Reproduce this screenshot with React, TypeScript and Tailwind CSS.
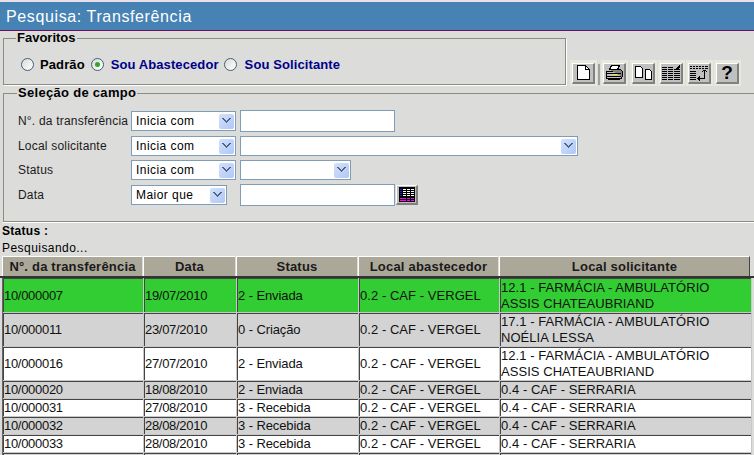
const rows = [
  { id: "10/000007", date: "19/07/2010", status: "2 - Enviada", from: "0.2 - CAF - VERGEL", to: ["12.1 - FARMÁCIA - AMBULATÓRIO", "ASSIS CHATEAUBRIAND"], bg: "bg-[#32cd32]", h: "h-[34px]" },
  { id: "10/000011", date: "23/07/2010", status: "0 - Criação", from: "0.2 - CAF - VERGEL", to: ["17.1 - FARMÁCIA - AMBULATÓRIO", "NOÉLIA LESSA"], bg: "bg-[#d3d3d3]", h: "h-[33px]" },
  { id: "10/000016", date: "27/07/2010", status: "2 - Enviada", from: "0.2 - CAF - VERGEL", to: ["12.1 - FARMÁCIA - AMBULATÓRIO", "ASSIS CHATEAUBRIAND"], bg: "bg-white", h: "h-[33px]" },
  { id: "10/000020", date: "18/08/2010", status: "2 - Enviada", from: "0.2 - CAF - VERGEL", to: ["0.4 - CAF - SERRARIA"], bg: "bg-[#d3d3d3]", h: "h-[17px]" },
  { id: "10/000031", date: "27/08/2010", status: "3 - Recebida", from: "0.2 - CAF - VERGEL", to: ["0.4 - CAF - SERRARIA"], bg: "bg-white", h: "h-[17px]" },
  { id: "10/000032", date: "28/08/2010", status: "3 - Recebida", from: "0.2 - CAF - VERGEL", to: ["0.4 - CAF - SERRARIA"], bg: "bg-[#d3d3d3]", h: "h-[17px]" },
  { id: "10/000033", date: "28/08/2010", status: "3 - Recebida", from: "0.2 - CAF - VERGEL", to: ["0.4 - CAF - SERRARIA"], bg: "bg-white", h: "h-[17px]" },
  { id: "", date: "", status: "", from: "", to: [""], bg: "bg-[#d3d3d3]", h: "h-[17px]" },
];

const headers = [
  { label: "N°. da transferência", w: "w-[140px]" },
  { label: "Data", w: "w-[92px]" },
  { label: "Status", w: "w-[121px]" },
  { label: "Local abastecedor", w: "w-[140px]" },
  { label: "Local solicitante", w: "w-[251px] border-r border-r-[#444]" },
];

const cellStyles = [
  "w-[140px] tracking-[-0.3px]",
  "w-[92px] tracking-[-0.3px]",
  "w-[121px] tracking-[-0.1px]",
  "w-[140px] tracking-[0.05px]",
];

function Chevron() {
  return (
    <span className="flex h-[15px] w-[15px] items-center justify-center rounded-[2px] bg-gradient-to-br from-[#d3e0fb] to-[#b0c8f5]">
      <svg width="9" height="6" viewBox="0 0 9 6" shapeRendering="crispEdges">
        <path d="M0 0h2v1h1v1h1v1h1V2h1V1h1V0h2v1H8v1H7v1H6v1H5v1H4V4H3V3H2V2H1V1H0z" fill="#4d6185" />
      </svg>
    </span>
  );
}

function Combo({ value, width }: { value?: string; width: string }) {
  return (
    <div className={`flex h-5 shrink-0 items-center justify-between border border-[#7f9db9] bg-white pl-1 pr-px ${width}`}>
      <span className="tracking-[0.45px]">{value}</span>
      <Chevron />
    </div>
  );
}

function TextBox({ className }: { className: string }) {
  return <input type="text" className={`shrink-0 border border-[#7f9db9] bg-white ${className}`} />;
}

function Radio({ checked }: { checked?: boolean }) {
  return (
    <span className="flex h-[13px] w-[13px] shrink-0 items-center justify-center rounded-full border border-[#3f5f80] bg-gradient-to-br from-[#dcdcd4] to-white">
      {checked && <span className="h-[5px] w-[5px] rounded-full bg-[#31a52f]" />}
    </span>
  );
}

function ToolButton({ children }: { children: React.ReactNode }) {
  return (
    <div className="flex h-[26px] w-[27px] items-center justify-center bg-[#e8e8dc]">
      <div className="flex h-[21px] w-[23px] items-center justify-center border-t border-l border-white border-r-2 border-b-2 border-r-[#808080] border-b-[#808080] bg-[#c0c0c0]">
        {children}
      </div>
    </div>
  );
}

function NewIcon() {
  return (
    <svg width="13" height="15" viewBox="0 0 13 15" shapeRendering="crispEdges">
      <path d="M.5.5h8l4 4v10H.5z" fill="#fff" stroke="#000" />
      <path d="M8.5.5v4h4" fill="none" stroke="#000" />
    </svg>
  );
}

function PrintIcon() {
  return (
    <svg width="17" height="15" viewBox="0 0 17 15" shapeRendering="crispEdges">
      <path d="M5.5.5h8l-2 4h-8z" fill="#fff" stroke="#000" />
      <path d="M.5 6.5h15v7H.5z" fill="#c0c0c0" stroke="#000" />
      <path d="M3.5 4.5h11l2 2v5h-1" fill="#808080" stroke="#000" />
      <path d="M1 8h14M1 11h14" stroke="#000" />
      <path d="M6 9h5v1H6z" fill="#ffea00" />
      <path d="M2 14h12v1H2z" fill="#000" />
    </svg>
  );
}

function CopyIcon() {
  return (
    <svg width="17" height="14" viewBox="0 0 17 14" shapeRendering="crispEdges">
      <path d="M.5.5h5l2 2v9H.5z" fill="#fff" stroke="#000" />
      <path d="M10.5 3.5h4l2 2v8h-6z" fill="#fff" stroke="#000" />
    </svg>
  );
}

function ColumnsIcon() {
  const lines = [4, 6, 8, 10, 12, 14];
  return (
    <svg width="18" height="16" viewBox="0 0 18 16" shapeRendering="crispEdges">
      {lines.map((y) => (
        <path key={y} d={`M0 ${y}h5M6 ${y}h5M12 ${y}h6`} stroke="#000" fill="none" />
      ))}
      <path d="M0 2h5M6 2h5" stroke="#000" fill="none" />
      <path d="M13 5h3v-1h-2v-1h1V2h1V1h1V0h1v3h-1v2z" fill="#000" />
    </svg>
  );
}

function SortIcon() {
  return (
    <svg width="18" height="16" viewBox="0 0 18 16" shapeRendering="crispEdges">
      <path d="M0 1h2M3 1h2M6 1h2M9 1h2M12 1h2M15 1h3M0 3h2M3 3h2M6 3h2M9 3h2M12 3h2M15 3h3" stroke="#000" fill="none" />
      <path d="M0 6h6M0 8h6M0 10h6M0 12h6M0 14h6" stroke="#000" fill="none" />
      <path d="M14 6h1v8H9v-1h5zM12 6h5v1h-1v-1h-3v1h-1zM13 5h3v1h-3zM9 11h1v5H9zM8 12h1v3H8zM7 13h1v1H7z" fill="#000" />
    </svg>
  );
}

function HelpIcon() {
  return <span className="text-[19px] leading-none font-bold text-black">?</span>;
}

function CalendarIcon() {
  const cells = [];
  for (const y of [2, 4, 6, 8]) {
    cells.push(<rect key={`b${y}`} x="1" y={y} width="2" height="1" fill="#2020c0" />);
    for (const x of [4, 8, 12]) {
      cells.push(<rect key={`${x}-${y}`} x={x} y={y} width="3" height="1" fill="#fff" />);
    }
  }
  for (const y of [11, 13]) {
    for (const x of [1, 4, 8, 12]) {
      cells.push(<rect key={`${x}-${y}`} x={x} y={y} width="3" height="1" fill="#f0f" />);
    }
  }
  return (
    <span className="flex h-5 w-[22px] items-center justify-center border-t border-l border-white border-r-2 border-b-2 border-r-[#808080] border-b-[#808080] bg-[#c0c0c0]">
      <svg width="16" height="15" viewBox="0 0 16 15" shapeRendering="crispEdges">
        <rect width="16" height="15" fill="#000" />
        {cells}
      </svg>
    </span>
  );
}

function FieldRow({ label, className, children }: { label: string; className: string; children: React.ReactNode }) {
  return (
    <div className={`flex items-center ${className}`}>
      <span className="ml-[14px] w-[113px] shrink-0 tracking-[0.2px] whitespace-nowrap text-[#1a1a1a]">{label}</span>
      {children}
    </div>
  );
}

export default function App() {
  return (
    <div className="h-[455px] w-[754px] overflow-hidden bg-[#dcdcda] text-[12px] text-black [font-family:'Liberation_Sans',Arial,sans-serif]">
      <div className="h-[2px] bg-[#e9dfe9]" />
      <div className="flex h-[29px] items-center border-b border-[#6e0f5e] bg-[#4682b4] pt-px pl-[6px] text-[16px] font-medium tracking-[0.62px] text-white">
        Pesquisa: Transferência
      </div>

      <div className="flex items-end">
        <fieldset className="ml-[3px] h-[54px] w-[563px] border border-[#8c8c80] pl-[12px] shadow-[1px_1px_0_#fff]">
          <legend className="px-px text-[13px] leading-[14px] font-bold">Favoritos</legend>
          <div className="mt-[10px] ml-[5px] flex items-center text-[13px] font-bold tracking-[0.1px]">
            <Radio />
            <span className="ml-[6px] mr-[6px]">Padrão</span>
            <Radio checked />
            <span className="ml-[7px] mr-[5px] text-[#00008b]">Sou Abastecedor</span>
            <Radio />
            <span className="ml-[8px] text-[#00008b]">Sou Solicitante</span>
          </div>
        </fieldset>
        <div className="ml-[4px] -mb-px flex">
          <ToolButton><NewIcon /></ToolButton>
          <div className="mx-px mt-[4px] h-[21px] w-[2px] bg-[#a0a0a0]" />
          <ToolButton><PrintIcon /></ToolButton>
          <span className="w-[2px]" />
          <ToolButton><CopyIcon /></ToolButton>
          <span className="w-px" />
          <ToolButton><ColumnsIcon /></ToolButton>
          <span className="w-px" />
          <ToolButton><SortIcon /></ToolButton>
          <span className="w-px" />
          <ToolButton><HelpIcon /></ToolButton>
        </div>
      </div>

      <fieldset className="mt-[1px] ml-[3px] h-[136px] border border-r-0 border-[#8c8c80] shadow-[0_1px_0_#fff]">
        <legend className="ml-[13px] px-px text-[13px] leading-[14px] font-bold tracking-[0.3px]">Seleção de campo</legend>
        <FieldRow label="N°. da transferência" className="mt-[10px] h-[22px]">
          <Combo value="Inicia com" width="w-[105px]" />
          <TextBox className="ml-[4px] h-[22px] w-[155px]" />
        </FieldRow>
        <FieldRow label="Local solicitante" className="mt-[4px] h-5">
          <Combo value="Inicia com" width="w-[105px]" />
          <div className="ml-[4px]"><Combo width="w-[338px]" /></div>
        </FieldRow>
        <FieldRow label="Status" className="mt-[4px] h-5">
          <Combo value="Inicia com" width="w-[105px]" />
          <div className="ml-[4px]"><Combo width="w-[111px]" /></div>
        </FieldRow>
        <FieldRow label="Data" className="mt-[4px] h-[22px]">
          <Combo value="Maior que" width="w-[96px]" />
          <TextBox className="ml-[13px] h-[22px] w-[155px]" />
          <span className="ml-px"><CalendarIcon /></span>
        </FieldRow>
      </fieldset>

      <div className="mt-[2px] pl-[2px] leading-[15px] font-bold tracking-[0.3px]">Status :</div>
      <div className="mt-[2px] pl-[2px] leading-[15px] tracking-[0.45px]">Pesquisando...</div>

      <div className="ml-[2px] flex h-[20px] gap-px">
        {headers.map((h) => (
          <div
            key={h.label}
            className={`flex shrink-0 items-center justify-center border-t border-l border-white bg-[#aca899] text-[13px] leading-none font-bold tracking-[0.2px] text-[#1a1a1a] ${h.w}`}
          >
            {h.label}
          </div>
        ))}
      </div>
      <div className="h-[2px] bg-[#333]" />

      <div className="ml-[2px] w-[750px] border-l border-[#666] bg-[#c8c8c8]">
        {rows.map((r) => {
          const cells = [r.id, r.date, r.status, r.from];
          return (
            <div key={r.id || "next"} className={`mb-px flex gap-px ${r.h}`}>
              {cells.map((c, i) => (
                <div
                  key={i}
                  className={`flex shrink-0 items-center border-t border-l border-[#444] text-[13px] leading-[16px] text-[#111] ${cellStyles[i]} ${r.bg}`}
                >
                  {c}
                </div>
              ))}
              <div className={`flex w-[251px] shrink-0 flex-col justify-center border-t border-l border-[#444] text-[13px] leading-[16px] tracking-[0.05px] text-[#111] ${r.bg}`}>
                {r.to.map((t) => (
                  <div key={t}>{t}</div>
                ))}
              </div>
            </div>
          );
        })}
      </div>
    </div>
  );
}
